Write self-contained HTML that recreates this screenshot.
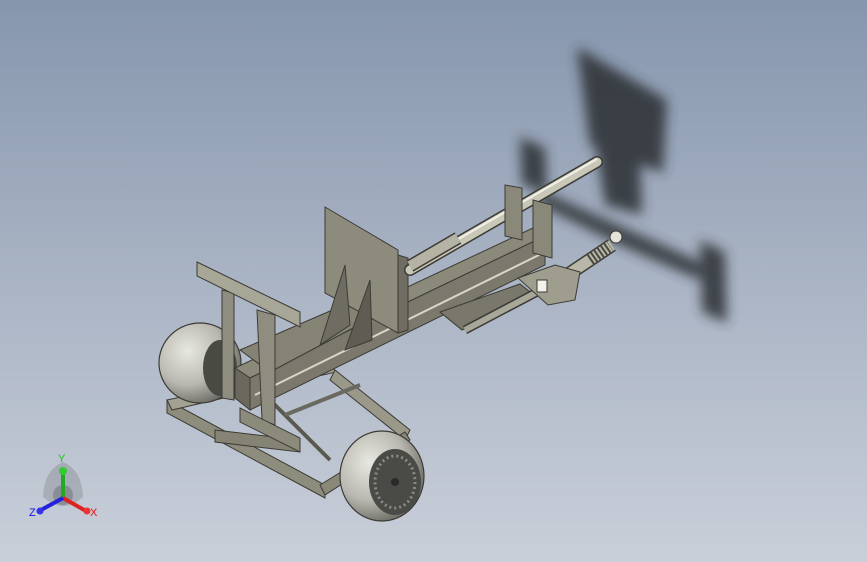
<!DOCTYPE html>
<html><head><style>
html,body{margin:0;padding:0;width:867px;height:562px;overflow:hidden}
body{background:linear-gradient(180deg,#8696ad 0%,#a6b1c2 45%,#c9cfd9 100%)}
svg{position:absolute;left:0;top:0}
</style></head><body>
<svg width="867" height="562" viewBox="0 0 867 562" xmlns="http://www.w3.org/2000/svg">
<defs>
<filter id="b" x="-30%" y="-30%" width="160%" height="160%"><feGaussianBlur stdDeviation="6"/></filter>
<radialGradient id="t" cx="0.35" cy="0.35" r="0.7"><stop offset="0" stop-color="#e8e8e2"/><stop offset="0.6" stop-color="#b8b8b0"/><stop offset="1" stop-color="#6c6c66"/></radialGradient>
</defs>
<g filter="url(#b)" fill="#2a2d32" opacity="0.85">
<polygon points="577,47 667,100 663,173 590,145"/>
<polygon points="595,140 640,160 642,215 605,205"/>
<polygon points="520,137 545,148 547,192 522,185"/>
<polygon points="540,190 700,262 700,280 620,245 540,205"/>
<polygon points="700,240 725,252 727,323 702,312"/>
</g>
<g stroke="#3c3b35" stroke-width="1">
<polygon points="167,400 325,485 325,498 167,413" fill="#8e8c7d"/>
<polygon points="167,400 330,365 336,372 172,410" fill="#a3a192"/>
<polygon points="335,370 410,430 405,440 330,380" fill="#9a9889"/>
<polygon points="320,485 405,432 410,440 325,495" fill="#8a8878"/>
<polygon points="215,430 300,440 300,452 215,442" fill="#858373"/>
</g>
<line x1="270" y1="400" x2="330" y2="460" stroke="#5a5950" stroke-width="4"/>
<line x1="285" y1="415" x2="360" y2="385" stroke="#6a695f" stroke-width="4"/>
<ellipse cx="200" cy="363" rx="41" ry="40" fill="url(#t)" stroke="#3c3b35" stroke-width="1.2"/>
<ellipse cx="220" cy="368" rx="17" ry="28" fill="#4a4a45"/>
<g stroke="#3c3b35" stroke-width="1">
<polygon points="235,368 533,228 545,236 250,378" fill="#8b8979"/>
<polygon points="250,378 545,236 545,265 250,410" fill="#7b796b"/>
<line x1="255" y1="395" x2="545" y2="252" stroke="#d8d6c8" stroke-width="2"/>
<polygon points="235,368 250,378 250,410 235,398" fill="#6b695d"/>
<polygon points="240,350 360,298 372,318 270,372" fill="#858373"/>
<polygon points="440,312 520,284 535,296 462,330" fill="#7a786b"/>
</g>
<g stroke="#3c3b35" stroke-width="1">
<polygon points="222,290 234,293 234,400 222,398" fill="#8f8d7f"/>
<polygon points="257,310 275,315 275,425 262,420" fill="#8f8d7f"/>
<polygon points="197,262 300,312 300,327 197,276" fill="#a8a696"/>
<polygon points="240,408 300,438 300,452 240,422" fill="#8c8a7b"/>
</g>
<g stroke="#3c3b35" stroke-width="1">
<polygon points="325,207 398,250 398,333 325,293" fill="#8d8b7c"/>
<polygon points="345,265 350,325 320,345" fill="#6f6d61"/>
<polygon points="370,280 372,340 345,350" fill="#5f5d53"/>
<polygon points="398,255 408,258 408,330 398,333" fill="#6f6d61"/>
</g>
<line x1="410" y1="270" x2="597" y2="162" stroke="#3c3b35" stroke-width="12" stroke-linecap="round"/>
<line x1="410" y1="270" x2="597" y2="162" stroke="#c9c7b8" stroke-width="9" stroke-linecap="round"/>
<line x1="410" y1="267" x2="597" y2="159" stroke="#f2f1e8" stroke-width="2"/>
<line x1="458" y1="238" x2="410" y2="266" stroke="#3c3b35" stroke-width="13"/>
<line x1="458" y1="238" x2="410" y2="266" stroke="#b5b3a3" stroke-width="10"/>
<polygon points="505,185 522,188 522,240 505,236" fill="#8a8878" stroke="#3c3b35"/>
<polygon points="533,200 552,205 552,258 533,253" fill="#8a8878" stroke="#3c3b35"/>
<line x1="465" y1="330" x2="560" y2="280" stroke="#3c3b35" stroke-width="9"/>
<line x1="465" y1="330" x2="560" y2="280" stroke="#a9a797" stroke-width="6"/>
<line x1="545" y1="290" x2="612" y2="245" stroke="#3c3b35" stroke-width="14"/>
<line x1="545" y1="290" x2="612" y2="245" stroke="#b9b7a8" stroke-width="11"/>
<line x1="590" y1="260" x2="610" y2="246" stroke="#4a4943" stroke-width="13" stroke-dasharray="2 2"/>
<circle cx="616" cy="237" r="6" fill="#e4e3da" stroke="#3c3b35"/>
<polygon points="518,278 555,265 580,272 575,300 548,305" fill="#9f9d8e" stroke="#3c3b35"/>
<rect x="537" y="280" width="10" height="12" fill="#f2f2ea" stroke="#3c3b35"/>
<ellipse cx="382" cy="476" rx="42" ry="45" fill="url(#t)" stroke="#3c3b35" stroke-width="1.2"/>
<ellipse cx="395" cy="482" rx="26" ry="33" fill="#4a4a46"/>
<ellipse cx="395" cy="482" rx="20" ry="26" fill="none" stroke="#8a8a86" stroke-width="3" stroke-dasharray="2 3"/>
<circle cx="395" cy="482" r="4" fill="#2a2a28"/>
<path d="M43 497 Q44 470 63 462 Q82 470 83 497 Q63 515 43 497Z" fill="#000" opacity="0.13"/>
<circle cx="63" cy="495" r="10" fill="#000" opacity="0.18"/>
<line x1="63" y1="498" x2="63" y2="473" stroke="#22aa22" stroke-width="4"/>
<circle cx="63" cy="471" r="4" fill="#3c3"/>
<line x1="63" y1="498" x2="86" y2="511" stroke="#d22" stroke-width="4"/>
<circle cx="87" cy="511" r="3.5" fill="#e33"/>
<line x1="63" y1="498" x2="41" y2="510" stroke="#22d" stroke-width="4"/>
<circle cx="40" cy="511" r="3.5" fill="#33e"/>
<text x="58" y="462" font-family="Liberation Sans" font-size="11" fill="#1c1">Y</text>
<text x="90" y="516" font-family="Liberation Sans" font-size="11" fill="#e11">X</text>
<text x="29" y="516" font-family="Liberation Sans" font-size="11" fill="#11e">Z</text>
</svg>
</body></html>
